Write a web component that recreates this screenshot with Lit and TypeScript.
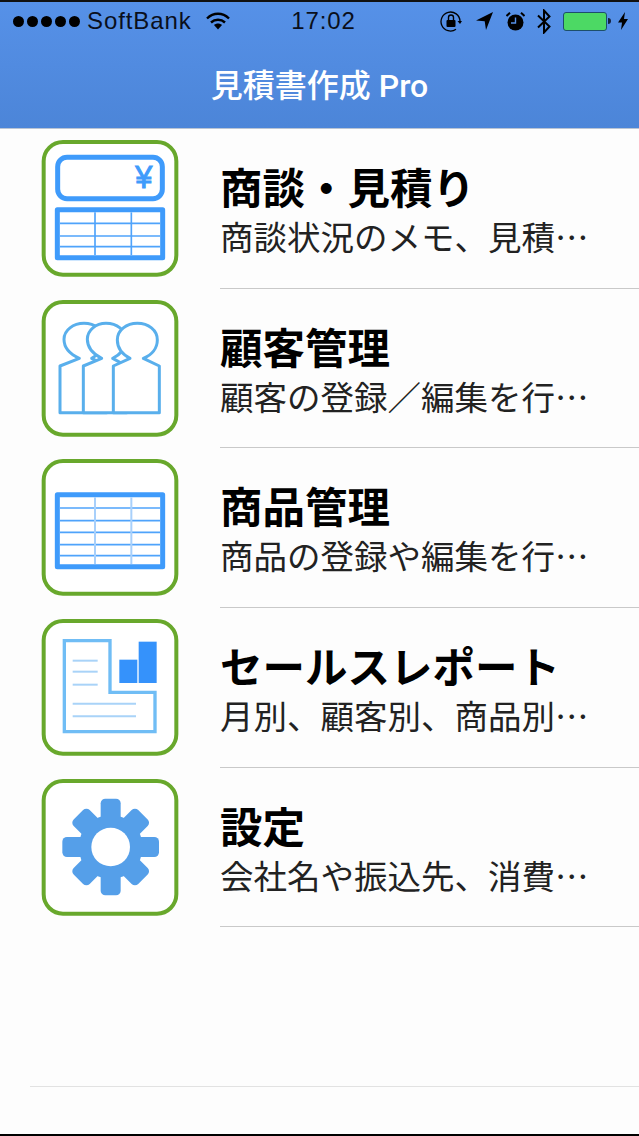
import { LitElement, html, svg, css } from 'lit';
import { customElement } from 'lit/decorators.js';

// all tile drawings share one coordinate space, 3 units per pixel
const tile = (content: unknown) => html`
  <svg class="tile" viewBox="33 30 414 414">
    <rect x="41" y="36" width="398" height="398" rx="58" fill="#fff" stroke="#68a82c" stroke-width="12"></rect>
    ${content}
  </svg>
`;

const grid = (top: number, bottom: number, rows: number[], colColor: string, colWidth: number) => svg`
  <rect x="82" y="${top + 7}" width="316" height="${bottom - top - 14}" fill="#fff" stroke="#3f9bfb" stroke-width="15" stroke-linejoin="round"></rect>
  ${rows.map((y) => svg`<line x1="90" x2="390" y1="${y}" y2="${y}" stroke="#4fa3fb" stroke-width="5"></line>`)}
  ${[195, 304].map((x) => svg`<line x1="${x}" x2="${x}" y1="${top + 15}" y2="${bottom - 15}" stroke="${colColor}" stroke-width="${colWidth}"></line>`)}
`;

const quoteIcon = tile(svg`
  <rect x="83" y="82" width="314" height="124" rx="28" fill="#fff" stroke="#3f9bfb" stroke-width="15"></rect>
  <text x="341" y="173" text-anchor="middle" font-family="Liberation Sans" font-size="92" fill="#3f9bfb" stroke="#3f9bfb" stroke-width="3">¥</text>
  ${grid(232, 390, [280, 318, 350], '#4fa3fb', 5)}
`);

const peopleIcon = tile(svg`
  <g fill="#fff" stroke="#59afec" stroke-width="9" stroke-linejoin="round">
    <path d="M90 368V228L148 205C118 192 102 172 102 148C102 120 130 100 162 100C194 100 222 120 222 150C222 175 205 195 185 205L230 228V368Z"></path>
    <path d="M160 368V228L215 205C185 190 172 170 172 148C172 120 198 100 228 100C260 100 288 120 288 150C288 175 270 195 248 205L290 228V368Z"></path>
    <path d="M250 368V228L300 205C272 190 262 170 262 150C262 120 290 100 322 100C355 100 382 120 382 150C382 175 365 195 340 205L388 228V368Z"></path>
  </g>
`);

const productIcon = tile(grid(130, 360, [177, 215, 250, 287, 320], '#a8d0fb', 6));

const reportIcon = tile(svg`
  <path d="M103 95H240V250H375V368H103Z" fill="#fff" stroke="#70bdf5" stroke-width="10"></path>
  <g stroke="#a9d3f8" stroke-width="6">
    <line x1="128" x2="203" y1="155" y2="155"></line>
    <line x1="128" x2="203" y1="188" y2="188"></line>
    <line x1="128" x2="203" y1="227" y2="227"></line>
    <line x1="128" x2="318" y1="284" y2="284"></line>
    <line x1="128" x2="318" y1="322" y2="322"></line>
  </g>
  <rect x="268" y="152" width="54" height="70" fill="#3592fb"></rect>
  <rect x="326" y="98" width="54" height="124" fill="#3592fb"></rect>
`);

const settingsIcon = tile(svg`
  <g fill="#559fe9">
    <circle cx="242" cy="234" r="96"></circle>
    <rect x="212" y="89" width="60" height="290" rx="14"></rect>
    <rect x="97" y="204" width="290" height="60" rx="14"></rect>
    <rect x="208" y="97" width="68" height="274" rx="14" transform="rotate(45 242 234)"></rect>
    <rect x="208" y="97" width="68" height="274" rx="14" transform="rotate(-45 242 234)"></rect>
  </g>
  <circle cx="242" cy="234" r="58" fill="#fff"></circle>
`);

const items = [
  { icon: quoteIcon, title: '商談・見積り', sub: '商談状況のメモ、見積…' },
  { icon: peopleIcon, title: '顧客管理', sub: '顧客の登録／編集を行…' },
  { icon: productIcon, title: '商品管理', sub: '商品の登録や編集を行…' },
  { icon: reportIcon, title: 'セールスレポート', sub: '月別、顧客別、商品別…' },
  { icon: settingsIcon, title: '設定', sub: '会社名や振込先、消費…' },
];

@customElement('app-root')
export class AppRoot extends LitElement {
  static styles = css`
    :host {
      display: flex;
      flex-direction: column;
      width: 639px;
      height: 1136px;
      background: #fdfdfd;
      color: #000;
      font-family: 'Noto Sans CJK JP', sans-serif;
      overflow: hidden;
    }

    .header {
      height: 129px;
      box-sizing: border-box;
      border-top: 2px solid #111;
      border-bottom: 1px solid #b9c4d4;
      background: linear-gradient(#5691e8, #4c85d8);
      flex: none;
    }

    .status {
      display: grid;
      grid-template-columns: 1fr auto 1fr;
      align-items: center;
      height: 38px;
      padding: 0 11px 0 13px;
      font-family: 'Liberation Sans', sans-serif;
      font-size: 24px;
      letter-spacing: 0.9px;
      color: #0a0f1c;
    }

    .status-left,
    .status-right {
      display: flex;
      align-items: center;
    }

    .status-right {
      justify-content: flex-end;
    }

    .dots {
      display: flex;
      gap: 3px;
      margin-right: 7px;
    }

    .dots i {
      width: 11px;
      height: 11px;
      border-radius: 50%;
      background: #000;
    }

    .wifi {
      margin-left: 14px;
    }

    .time {
      margin-left: 6px;
    }

    .rotation { margin-right: 14px; }
    .location { margin-right: 13px; }
    .alarm { margin-right: 12px; }
    .bluetooth { margin-right: 12px; }
    .bolt { margin-left: 7px; }

    .battery {
      display: flex;
      align-items: center;
    }

    .battery-body {
      width: 44px;
      height: 19px;
      box-sizing: border-box;
      border: 1px solid #1d4f6b;
      border-radius: 3px;
      background: #4cd964;
    }

    .battery-nub {
      width: 3px;
      height: 6px;
      margin-left: 1px;
      border-radius: 0 3px 3px 0;
      background: #14233f;
    }

    .title {
      margin-top: 6px;
      text-align: center;
      font-family: Roboto, 'Noto Sans CJK JP', sans-serif;
      font-size: 32px;
      font-weight: 500;
      line-height: 80px;
      height: 80px;
      color: #fff;
    }

    .list {
      flex: 1;
    }

    .row {
      display: flex;
      align-items: center;
      height: 159.7px;
      padding-left: 41px;
      gap: 41px;
      box-sizing: border-box;
    }

    .tile {
      width: 138px;
      height: 138px;
      flex: none;
    }

    .text {
      flex: 1;
      align-self: stretch;
      display: flex;
      flex-direction: column;
      justify-content: center;
      border-bottom: 1px solid #c9c9c9;
      padding-top: 5px;
      min-width: 0;
    }

    .name {
      font-size: 42.5px;
      font-weight: 700;
      line-height: 50px;
      white-space: nowrap;
    }

    .sub {
      font-size: 33.5px;
      line-height: 50px;
      color: #222;
      white-space: nowrap;
    }

    .footer {
      flex: none;
      height: 50px;
      box-sizing: border-box;
      border-bottom: 2px solid #000;
    }

    .footer-line {
      margin-left: 30px;
      height: 1px;
      background: #e2e2e2;
    }
  `;

  render() {
    return html`
      <div class="header">
        <div class="status">
          <div class="status-left">
            <div class="dots"><i></i><i></i><i></i><i></i><i></i></div>
            <span>SoftBank</span>
            <svg class="wifi" width="24" height="18" viewBox="0 0 24 18">
              <path d="M1 6.5C7.5 0.2 16.5 0.2 23 6.5" fill="none" stroke="#000" stroke-width="2.4"></path>
              <path d="M5 10.5C9 6.8 15 6.8 19 10.5" fill="none" stroke="#000" stroke-width="2.4"></path>
              <path d="M8 13C10.4 11 13.6 11 16 13L12 17.5Z" fill="#000"></path>
            </svg>
          </div>
          <span class="time">17:02</span>
          <div class="status-right">
            <svg class="rotation" width="22" height="22" viewBox="0 0 22 22">
              <path d="M20 11A9.5 9.5 0 1 0 16 19.3" fill="none" stroke="#000" stroke-width="1.3"></path>
              <path d="M17.5 11H22L20 14Z" fill="#000"></path>
              <rect x="6.5" y="10" width="9" height="7" rx="1" fill="#000"></rect>
              <path d="M8.5 10V7.5a2.5 2.5 0 0 1 5 0V10" fill="none" stroke="#000" stroke-width="1.4"></path>
            </svg>
            <svg class="location" width="17" height="18" viewBox="0 0 17 18">
              <path d="M17 0L0 8.5L8.7 9.2L10 18Z" fill="#000"></path>
            </svg>
            <svg class="alarm" width="19" height="19" viewBox="0 0 19 19">
              <circle cx="9.5" cy="10.5" r="8" fill="#000"></circle>
              <path d="M9.5 5.5V11H5" fill="none" stroke="#5691e8" stroke-width="1.4"></path>
              <path d="M0.5 4L4 0.8M18.5 4L15 0.8" stroke="#000" stroke-width="2"></path>
            </svg>
            <svg class="bluetooth" width="14" height="25" viewBox="0 0 14 25">
              <path d="M1 6.5L12.5 17.5L7 23.5V1.5L12.5 7.5L1 18.5" fill="none" stroke="#000" stroke-width="2"></path>
            </svg>
            <div class="battery">
              <div class="battery-body"></div>
              <div class="battery-nub"></div>
            </div>
            <svg class="bolt" width="10" height="18" viewBox="0 0 10 18">
              <path d="M7 0L0 10.5H4L3 18L10 7H6Z" fill="#000"></path>
            </svg>
          </div>
        </div>
        <div class="title">見積書作成 Pro</div>
      </div>
      <div class="list">
        ${items.map(
          (item) => html`
            <div class="row">
              ${item.icon}
              <div class="text">
                <div class="name">${item.title}</div>
                <div class="sub">${item.sub}</div>
              </div>
            </div>
          `
        )}
      </div>
      <div class="footer"><div class="footer-line"></div></div>
    `;
  }
}
